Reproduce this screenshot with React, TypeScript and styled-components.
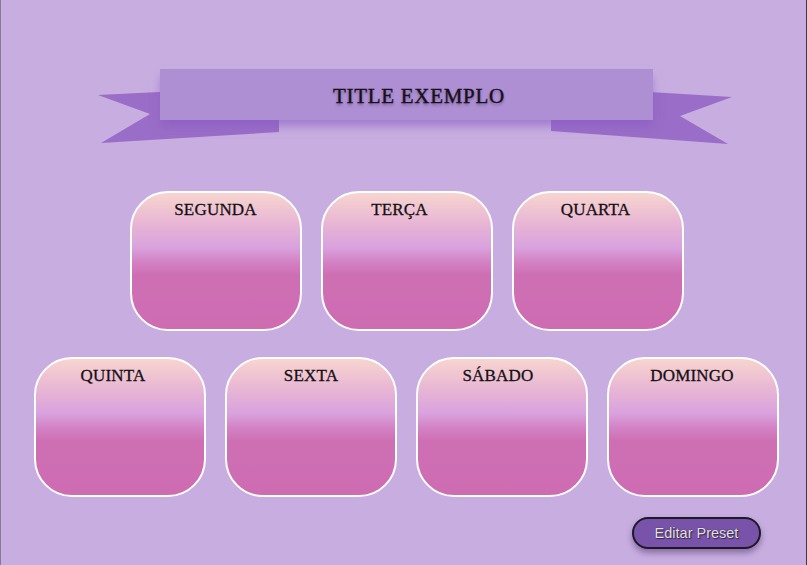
import React from 'react';
import styled, { createGlobalStyle } from 'styled-components';

const GlobalStyle = createGlobalStyle`
  html, body {
    margin: 0;
    padding: 0;
    background-color: #c8aee0;
  }
  * {
    box-sizing: border-box;
  }
`;

export const Page = styled.div`
  width: 807px;
  height: 565px;
  padding-top: 60px;
  padding-left: 6px;
  background-color: #c8aee0;
  border-left: 1px solid #857a98;
  border-right: 1px solid #3d3a44;
  display: flex;
  flex-direction: column;
  overflow: hidden;
`;

export const Ribbon = styled.div`
  position: relative;
  width: 100%;
  height: 90px;
  display: flex;
  justify-content: center;
  align-items: flex-start;
  padding-top: 9px;
`;

export const Tails = styled.svg`
  position: absolute;
  top: 0;
  left: 0;
  z-index: 0;
`;

export const Banner = styled.div`
  position: relative;
  z-index: 1;
  width: 493px;
  height: 51px;
  background-color: #ae8fd4;
  box-shadow: 0 7px 9px -1px rgba(135, 90, 195, 0.6);
  display: flex;
  align-items: center;
  justify-content: center;
  padding-left: 25px;
  padding-top: 3px;
`;

export const BannerTitle = styled.h1`
  margin: 0;
  font-family: 'Liberation Serif', 'Times New Roman', serif;
  font-size: 21px;
  font-weight: 400;
  letter-spacing: 0.7px;
  color: #151018;
  -webkit-text-stroke: 0.35px #151018;
  text-shadow: 0 2px 3px rgba(40, 20, 60, 0.45);
`;

export const Days = styled.div`
  margin-top: 41px;
  display: flex;
  flex-direction: column;
  gap: 26px;
`;

export const DayRow = styled.div`
  display: flex;
  justify-content: center;
  gap: 19px;
`;

export const DayCard = styled.div<{ $shift: number }>`
  width: 172px;
  height: 140px;
  border: 2px solid #ffffff;
  border-radius: 38px;
  background: linear-gradient(
    to bottom,
    #f7d5cf 0%,
    #e8b6d4 22%,
    #d9a2de 40%,
    #d384c6 50%,
    #ce6fb4 60%,
    #ce6cb2 100%
  );
  display: flex;
  justify-content: center;
  padding-top: 7px;
  padding-right: ${({ $shift }) => ($shift < 0 ? -$shift * 2 : 0)}px;
  padding-left: ${({ $shift }) => ($shift > 0 ? $shift * 2 : 0)}px;
`;

export const DayLabel = styled.span`
  font-family: 'Liberation Serif', 'Times New Roman', serif;
  font-size: 17px;
  font-weight: 400;
  line-height: 20px;
  color: #141014;
  letter-spacing: 0.2px;
  -webkit-text-stroke: 0.3px #141014;
`;

export const Footer = styled.div`
  margin-top: 20px;
  display: flex;
  justify-content: flex-end;
  padding-right: 45px;
`;

export const PresetButton = styled.button`
  width: 129px;
  height: 32px;
  border: 2px solid #1d1a28;
  border-radius: 16px;
  background-color: #7853a9;
  box-shadow: 0 4px 6px rgba(60, 30, 90, 0.45);
  font-family: 'Liberation Sans', Arial, sans-serif;
  font-size: 14.5px;
  color: #e4e2e8;
  text-shadow: 0 0 1px #1a1420, 1px 1px 1px rgba(20, 10, 30, 0.6);
  padding: 0;
  cursor: pointer;
`;

const topRow = [
  { name: 'SEGUNDA', shift: 0 },
  { name: 'TERÇA', shift: -7 },
  { name: 'QUARTA', shift: -2 },
];

const bottomRow = [
  { name: 'QUINTA', shift: -7 },
  { name: 'SEXTA', shift: 0 },
  { name: 'SÁBADO', shift: -4 },
  { name: 'DOMINGO', shift: -1 },
];

const App = (): JSX.Element => {
  return (
    <>
      <GlobalStyle />
      <Page>
        <Ribbon>
          <Tails width="800" height="90" viewBox="6 60 800 90">
            <polygon points="97,95 278,86 278,132 100,143 149,114" fill="#9a6dc8" />
            <polygon points="731,97 550,86 550,131 727,144 679,116" fill="#9a6dc8" />
          </Tails>
          <Banner>
            <BannerTitle>TITLE EXEMPLO</BannerTitle>
          </Banner>
        </Ribbon>
        <Days>
          <DayRow>
            {topRow.map((d) => (
              <DayCard key={d.name} $shift={d.shift}>
                <DayLabel>{d.name}</DayLabel>
              </DayCard>
            ))}
          </DayRow>
          <DayRow>
            {bottomRow.map((d) => (
              <DayCard key={d.name} $shift={d.shift}>
                <DayLabel>{d.name}</DayLabel>
              </DayCard>
            ))}
          </DayRow>
        </Days>
        <Footer>
          <PresetButton>Editar Preset</PresetButton>
        </Footer>
      </Page>
    </>
  );
};

export default App;
